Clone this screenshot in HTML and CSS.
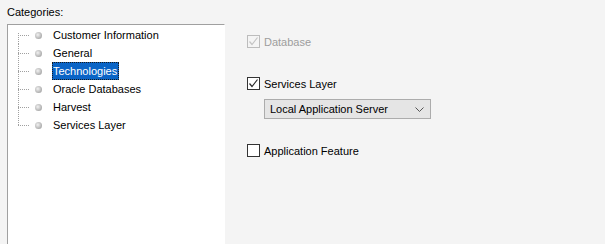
FILE: index.html
```html
<!DOCTYPE html>
<html>
<head>
  <title>Categories</title>
  <meta name="viewport" content="width=device-width, initial-scale=1.0">
  <link rel="stylesheet" href="styles.css">
</head>
<body>
  <div class="caption">Categories:</div>
  <div class="layout">
    <div class="tree-panel">
      <ul class="tree">
        <li class="node first"><span class="branch"></span><span class="bullet"></span><span class="node-label">Customer Information</span></li>
        <li class="node"><span class="branch"></span><span class="bullet"></span><span class="node-label">General</span></li>
        <li class="node"><span class="branch"></span><span class="bullet"></span><span class="node-label selected">Technologies</span></li>
        <li class="node"><span class="branch"></span><span class="bullet"></span><span class="node-label">Oracle Databases</span></li>
        <li class="node"><span class="branch"></span><span class="bullet"></span><span class="node-label">Harvest</span></li>
        <li class="node last"><span class="branch"></span><span class="bullet"></span><span class="node-label">Services Layer</span></li>
      </ul>
    </div>
    <div class="options">
      <label class="check disabled">
        <span class="box">
          <svg width="11" height="11" viewBox="0 0 11 11"><path d="M1.5 5.5 L4 8.5 L9.5 1.5" fill="none" stroke="#c4c4c4" stroke-width="1.2"/></svg>
        </span>
        <span>Database</span>
      </label>
      <label class="check services">
        <span class="box">
          <svg width="11" height="11" viewBox="0 0 11 11"><path d="M1.5 5.5 L4 8.5 L9.5 1.5" fill="none" stroke="#2b2b2b" stroke-width="1.2"/></svg>
        </span>
        <span>Services Layer</span>
      </label>
      <div class="select">
        <span>Local Application Server</span>
        <svg width="9" height="5" viewBox="0 0 9 5"><path d="M0.5 0.5 L4.5 4.5 L8.5 0.5" fill="none" stroke="#555" stroke-width="1"/></svg>
      </div>
      <label class="check feature">
        <span class="box"></span>
        <span>Application Feature</span>
      </label>
    </div>
  </div>
</body>
</html>
```

FILE: styles.css
```css
body {
  margin: 0;
  background-color: #f4f4f4;
  color: #000;
  font-family: "Liberation Sans", Arial, sans-serif;
  font-size: 11px;
  overflow: hidden;
}

.caption {
  padding: 5px 0 0 7px;
  height: 19px;
  line-height: 14px;
}

.layout {
  display: flex;
  height: 220px;
}

.tree-panel {
  margin-left: 7px;
  width: 218px;
  height: 220px;
  background-color: #fff;
  border-top: 1px solid #a0a0a0;
  border-left: 1px solid #a0a0a0;
  border-right: 1px solid #fff;
  box-sizing: border-box;
}

.tree {
  list-style: none;
  margin: 0;
  padding: 1px 0 0 10px;
}

.node {
  display: flex;
  align-items: center;
  height: 18px;
}

.branch {
  align-self: stretch;
  width: 12px;
  background-image:
    repeating-linear-gradient(to bottom, #a0a0a0 0 1px, transparent 1px 2px),
    repeating-linear-gradient(to right, #a0a0a0 0 1px, transparent 1px 2px);
  background-size: 1px 100%, 100% 1px;
  background-position: 0 0, 0 9px;
  background-repeat: no-repeat;
}

.node.first .branch {
  background-size: 1px 11px, 100% 1px;
  background-position: 0 7px, 0 9px;
}

.node.last .branch {
  background-size: 1px 10px, 100% 1px;
  background-position: 0 0, 0 9px;
}

.bullet {
  width: 7px;
  height: 7px;
  margin-left: 5px;
  border-radius: 50%;
  background: radial-gradient(circle at 40% 40%, #f2f2f2 0, #c6c6c6 45%, #8e8e8e 100%);
}

.node-label {
  margin-left: 10px;
  padding: 0 1px 0 0;
  line-height: 16px;
  border: 1px solid transparent;
}

.node-label.selected {
  background-color: #0a64c6;
  color: #fff;
  border: 1px dotted #1a1a1a;
}

.options {
  display: flex;
  flex-direction: column;
  align-items: flex-start;
  margin-left: 22px;
  padding-top: 11px;
}

.check {
  display: flex;
  align-items: center;
  gap: 4px;
  height: 13px;
}

.box {
  display: flex;
  align-items: center;
  justify-content: center;
  width: 13px;
  height: 13px;
  box-sizing: border-box;
  border: 1px solid #333;
  background-color: #fff;
}

.check.disabled {
  color: #9d9d9d;
}

.check.disabled .box {
  border-color: #bcbcbc;
  background-color: #f4f4f4;
}

.check.services {
  margin-top: 29px;
}

.select {
  display: flex;
  align-items: center;
  justify-content: space-between;
  box-sizing: border-box;
  width: 167px;
  height: 20px;
  margin: 9px 0 0 17px;
  padding: 0 6px 0 5px;
  background-color: #e5e5e5;
  border: 1px solid #acacac;
}

.check.feature {
  margin-top: 25px;
}
```
